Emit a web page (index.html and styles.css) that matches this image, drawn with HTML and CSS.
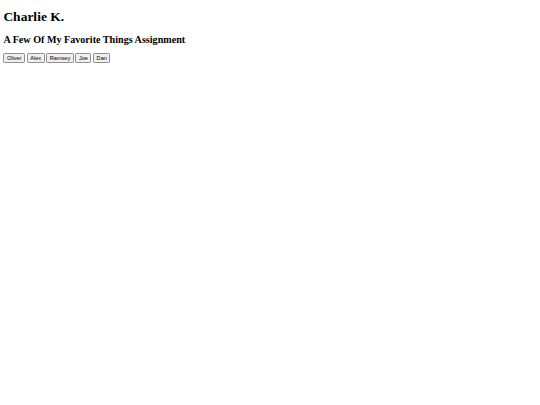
FILE: index.html
```html
<!DOCTYPE html>
<html lang="en">
<head>
<meta charset="utf-8">
<title>Charlie K.</title>
<link rel="stylesheet" href="styles.css">
</head>
<body class="page">
<h1 class="title">Charlie K.</h1>
<h2 class="subtitle">A Few Of My Favorite Things Assignment</h2>
<div class="buttons">
<button class="btn">Oliver</button>
<button class="btn">Alex</button>
<button class="btn">Ramsey</button>
<button class="btn">Joe</button>
<button class="btn">Dan</button>
</div>
</body>
</html>
```
FILE: styles.css
```css
html {
  background: #ffffff;
}

.page {
  margin: 0;
  padding: 0 3.375px 3.375px;
  font-family: "Liberation Serif", "Times New Roman", serif;
  color: #000000;
}

.title {
  font-family: "Liberation Serif", "Times New Roman", serif;
  font-size: 13.5px;
  font-weight: bold;
  margin: 9.05px 0;
}

.subtitle {
  font-family: "Liberation Serif", "Times New Roman", serif;
  font-size: 10.125px;
  font-weight: bold;
  margin: 8.4px 0;
}

.buttons {
  display: flex;
  align-items: flex-start;
  gap: 1.6px;
}

.btn {
  appearance: none;
  -webkit-appearance: none;
  margin: 0;
  font-family: "Liberation Sans", Arial, sans-serif;
  font-size: 5.625px;
  line-height: normal;
  padding: 0.6px 2.53px;
  border: 0.7px solid #8f8f8f;
  border-radius: 1.2px;
  background: #efefef;
  color: #000000;
}
```
